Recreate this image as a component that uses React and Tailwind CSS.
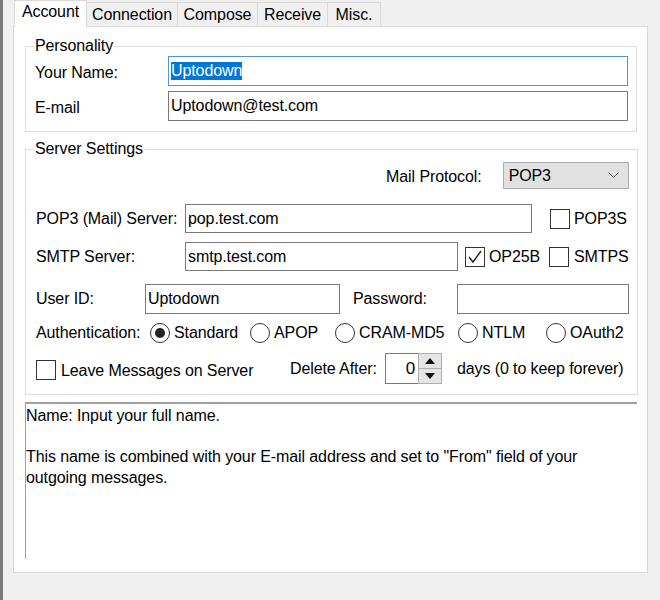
import React from 'react';

const font = "font-['Liberation_Sans',Arial,sans-serif]";

function Tab({ label, selected, first, width }) {
  if (selected) {
    return (
      <div
        className={`relative z-10 -mb-px flex h-[27px] items-start justify-center bg-white pt-[2px] border-t border-x border-[#d9d9d9] ${width}`}
      >
        {label}
      </div>
    );
  }
  return (
    <div
      className={`flex h-[24px] items-center justify-center bg-[#f0f0f0] border-t border-r border-[#d9d9d9] ${first ? 'border-l' : ''} ${width}`}
    >
      {label}
    </div>
  );
}

function CheckBox({ checked }) {
  return (
    <div className="flex h-[20px] w-[20px] shrink-0 items-center justify-center border border-[#333] bg-white">
      {checked && (
        <svg width="16" height="16" viewBox="0 0 16 16">
          <polyline points="2,8 6,13 14,2" fill="none" stroke="#222" strokeWidth="1.4" />
        </svg>
      )}
    </div>
  );
}

function Radio({ checked, label, width }) {
  return (
    <div className={`flex items-center ${width}`}>
      <div className="flex h-[20px] w-[20px] shrink-0 items-center justify-center rounded-full border border-[#333] bg-white">
        {checked && <div className="h-[10px] w-[10px] rounded-full bg-[#222]" />}
      </div>
      <span className="ml-[4px]">{label}</span>
    </div>
  );
}

function TextBox({ value, className = '', focused }) {
  return (
    <div
      className={`flex items-center border bg-white pl-[2px] ${focused ? 'border-[#4f94d4]' : 'border-[#7a7a7a]'} ${className}`}
    >
      {focused ? <span className="bg-[#0078d7] text-white">{value}</span> : value}
    </div>
  );
}

export default function App() {
  return (
    <div className={`${font} h-[600px] w-[660px] overflow-hidden border-l-[3px] border-[#7a7a7a] bg-[#f0f0f0] pl-[10px] text-[16px] leading-[18px] tracking-[-0.1px] text-black`}>
      {/* Tabs */}
      <div className="flex h-[26px] items-end pl-px">
        <Tab label="Account" selected width="w-[73px]" />
        <Tab label="Connection" width="w-[91px]" />
        <Tab label="Compose" width="w-[80px]" />
        <Tab label="Receive" width="w-[70px]" />
        <Tab label="Misc." width="w-[53px]" />
      </div>

      {/* Panel */}
      <div className="flex h-[547px] w-[635px] flex-col border border-[#d9d9d9] bg-white pl-[11px] pr-[10px]">
        {/* Personality */}
        <fieldset className="mt-[10px] border border-[#dcdcdc] pb-[10px] pl-[9px] pr-[8px]">
          <legend className="-ml-[1px] px-px">Personality</legend>
          <div className="mt-px flex h-[30px] items-center">
            <span className="mt-[3px] w-[133px]">Your Name:</span>
            <TextBox value="Uptodown" focused className="h-[30px] flex-1" />
          </div>
          <div className="mt-[5px] flex h-[30px] items-center">
            <span className="mt-[3px] w-[133px]">E-mail</span>
            <TextBox value="Uptodown@test.com" className="h-[30px] flex-1" />
          </div>
        </fieldset>

        {/* Server Settings */}
        <fieldset className="mt-[8px] border border-[#dcdcdc] pb-[10px] pl-[10px] pr-[8px]">
          <legend className="-ml-[2px] px-px">Server Settings</legend>

          <div className="mt-[4px] flex h-[27px] items-center justify-end">
            <span className="mr-[21px] mt-[2px]">Mail Protocol:</span>
            <div className="flex h-[27px] w-[126px] items-center justify-between border border-[#adadad] bg-[#e1e1e1] pl-[5px] pr-[9px]">
              <span>POP3</span>
              <svg width="11" height="7" viewBox="0 0 11 7">
                <polyline points="0.5,0.5 5.5,5.5 10.5,0.5" fill="none" stroke="#5a5a5a" strokeWidth="1" />
              </svg>
            </div>
          </div>

          <div className="mt-[15px] flex h-[29px] items-center">
            <span className="w-[149px]">POP3 (Mail) Server:</span>
            <TextBox value="pop.test.com" className="h-[29px] w-[347px]" />
            <div className="ml-[18px] flex items-center">
              <CheckBox />
              <span className="ml-[4px]">POP3S</span>
            </div>
          </div>

          <div className="mt-[9px] flex h-[29px] items-center">
            <span className="w-[149px]">SMTP Server:</span>
            <TextBox value="smtp.test.com" className="h-[29px] w-[273px]" />
            <div className="ml-[7px] flex w-[84px] items-center">
              <CheckBox checked />
              <span className="ml-[4px]">OP25B</span>
            </div>
            <div className="flex items-center">
              <CheckBox />
              <span className="ml-[5px]">SMTPS</span>
            </div>
          </div>

          <div className="mt-[13px] flex h-[30px] items-center">
            <span className="w-[109px]">User ID:</span>
            <TextBox value="Uptodown" className="h-[30px] w-[195px]" />
            <span className="ml-[13px] w-[104px]">Password:</span>
            <TextBox value="" className="h-[30px] flex-1" />
          </div>

          <div className="mt-[9px] flex h-[20px] items-center">
            <span className="w-[114px]">Authentication:</span>
            <Radio checked label="Standard" width="w-[100px]" />
            <Radio label="APOP" width="w-[85px]" />
            <Radio label="CRAM-MD5" width="w-[123px]" />
            <Radio label="NTLM" width="w-[88px]" />
            <Radio label="OAuth2" />
          </div>

          <div className="mt-[10px] flex h-[31px] items-center">
            <div className="flex w-[254px] items-center">
              <div className="mt-[3px]">
                <CheckBox />
              </div>
              <span className="ml-[5px] mt-[4px]">Leave Messages on Server</span>
            </div>
            <span className="w-[95px]">Delete After:</span>
            <div className="flex h-[31px] w-[57px]">
              <div className="flex flex-1 items-center justify-end border-y border-l border-[#7a7a7a] bg-white pr-[3px] text-[17px]">
                0
              </div>
              <div className="flex w-[24px] flex-col border border-[#adadad]">
                <div className="flex flex-1 items-center justify-center border-b border-[#adadad] bg-[#e5e5e5]">
                  <svg width="10" height="6" viewBox="0 0 10 6">
                    <polygon points="5,0 10,6 0,6" fill="#111" />
                  </svg>
                </div>
                <div className="flex flex-1 items-center justify-center bg-[#e5e5e5]">
                  <svg width="10" height="6" viewBox="0 0 10 6">
                    <polygon points="0,0 10,0 5,6" fill="#111" />
                  </svg>
                </div>
              </div>
            </div>
            <span className="ml-[15px]">days (0 to keep forever)</span>
          </div>
        </fieldset>

        {/* Help text */}
        <div className="mt-[7px] h-[157px] border-l border-t-2 border-[#a0a0a0] pt-[2px] leading-[20.5px]">
          <p>Name: Input your full name.</p>
          <p className="h-[20.5px]" />
          <p>
            This name is combined with your E-mail address and set to "From" field of your
            <br />
            outgoing messages.
          </p>
        </div>
      </div>
    </div>
  );
}
